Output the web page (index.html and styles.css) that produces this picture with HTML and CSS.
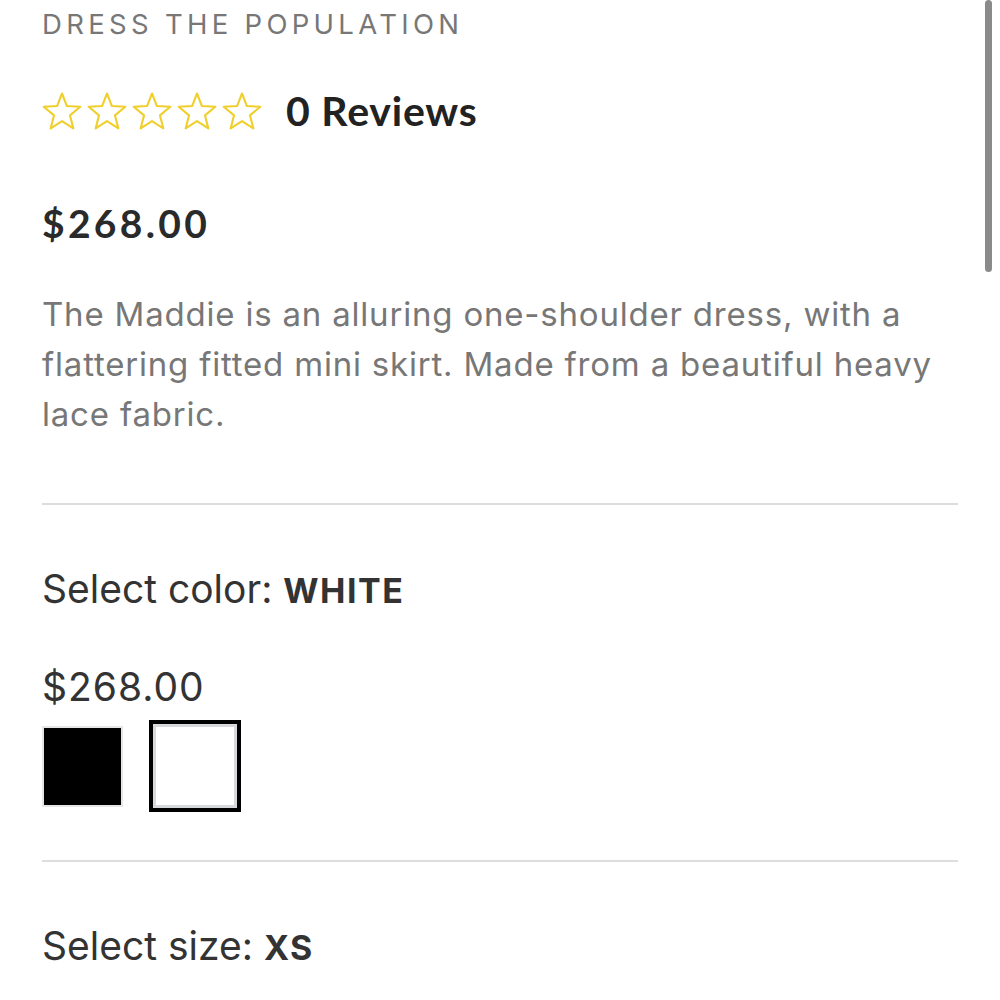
FILE: index.html
```html
<!DOCTYPE html>
<html lang="en">
<head>
  <meta charset="UTF-8">
  <title>The Maddie - Dress The Population</title>
  <link rel="stylesheet" href="styles.css">
</head>
<body>
  <div class="product">
    <p class="brand">DRESS THE POPULATION</p>

    <div class="rating">
      <div class="stars">
        <svg viewBox="0 0 24 24"><path d="M12 1.5L14.94 9.03L23 9.49L16.76 14.61L18.8 22.43L12 18.07L5.2 22.43L7.24 14.61L1 9.49L9.06 9.03Z"/></svg>
        <svg viewBox="0 0 24 24"><path d="M12 1.5L14.94 9.03L23 9.49L16.76 14.61L18.8 22.43L12 18.07L5.2 22.43L7.24 14.61L1 9.49L9.06 9.03Z"/></svg>
        <svg viewBox="0 0 24 24"><path d="M12 1.5L14.94 9.03L23 9.49L16.76 14.61L18.8 22.43L12 18.07L5.2 22.43L7.24 14.61L1 9.49L9.06 9.03Z"/></svg>
        <svg viewBox="0 0 24 24"><path d="M12 1.5L14.94 9.03L23 9.49L16.76 14.61L18.8 22.43L12 18.07L5.2 22.43L7.24 14.61L1 9.49L9.06 9.03Z"/></svg>
        <svg viewBox="0 0 24 24"><path d="M12 1.5L14.94 9.03L23 9.49L16.76 14.61L18.8 22.43L12 18.07L5.2 22.43L7.24 14.61L1 9.49L9.06 9.03Z"/></svg>
      </div>
      <span class="review-count">0 Reviews</span>
    </div>

    <p class="price">$268.00</p>

    <p class="description">The Maddie is an alluring one-shoulder dress, with a flattering fitted mini skirt. Made from a beautiful heavy lace fabric.</p>

    <hr class="divider">

    <div class="option">
      <p class="option-label">Select color: <strong>WHITE</strong></p>
      <p class="option-price">$268.00</p>
      <div class="swatches">
        <button class="swatch swatch-black" title="Black"></button>
        <button class="swatch swatch-white selected" title="White"></button>
      </div>
    </div>

    <hr class="divider divider-tight">

    <div class="option">
      <p class="option-label">Select size: <strong>XS</strong></p>
    </div>
  </div>

  <div class="scrollbar"></div>
</body>
</html>
```

FILE: styles.css
```css
body {
  margin: 0;
  background: #fff;
  color: #333;
  font-family: Lato, "Noto Sans", sans-serif;
  overflow: hidden;
}
.product {
  padding: 0 42px;
}
p {
  margin: 0;
}
.brand {
  padding-top: 6px;
  font-family: Inter, "Noto Sans", sans-serif;
  font-size: 27.5px;
  letter-spacing: 4.3px;
  color: #777;
  line-height: 36px;
}
.rating {
  display: flex;
  align-items: center;
  margin-top: 44px;
}
.stars {
  display: flex;
  gap: 5px;
}
.stars svg {
  width: 40px;
  height: 40px;
  fill: none;
  stroke: #f0cf2c;
  stroke-width: 1.25;
  stroke-linejoin: round;
}
.review-count {
  margin-left: 24px;
  font-size: 41px;
  font-weight: 700;
  letter-spacing: 0.8px;
  color: #222;
}
.price {
  margin-top: 66px;
  font-size: 39px;
  font-weight: 700;
  letter-spacing: 3.3px;
  color: #2a2a2a;
  line-height: 44px;
}
.description {
  margin-top: 44px;
  font-family: Inter, "Noto Sans", sans-serif;
  font-size: 33px;
  letter-spacing: 0.8px;
  line-height: 50px;
  color: #777;
}
.divider {
  border: none;
  border-top: 2px solid #ddd;
  margin: 64px 0 0;
}
.divider-tight {
  margin-top: 48px;
}
.option {
  padding-top: 60px;
}
.option-label {
  font-family: Inter, "Noto Sans", sans-serif;
  font-size: 39px;
  line-height: 48px;
  color: #333;
}
.option-label strong {
  font-size: 34px;
  font-weight: 700;
  letter-spacing: 1.5px;
}
.option-price {
  margin-top: 48px;
  font-family: Inter, "Noto Sans", sans-serif;
  font-size: 39px;
  letter-spacing: 1px;
  line-height: 48px;
  color: #333;
}
.swatches {
  display: flex;
  align-items: center;
  gap: 26px;
  margin-top: 9px;
}
.swatch {
  padding: 0;
  cursor: pointer;
  box-sizing: border-box;
}
.swatch-black {
  width: 81px;
  height: 81px;
  background: #000;
  border: 2px solid #e6e6e6;
}
.swatch-white {
  width: 92px;
  height: 92px;
  background: #fff;
  border: 4px solid #000;
  box-shadow: inset 0 0 0 3px #d6d8dc;
}
.scrollbar {
  position: absolute;
  top: 0;
  right: 8px;
  width: 7px;
  height: 272px;
  border-radius: 4px;
  background: #8a8a8a;
}
```
